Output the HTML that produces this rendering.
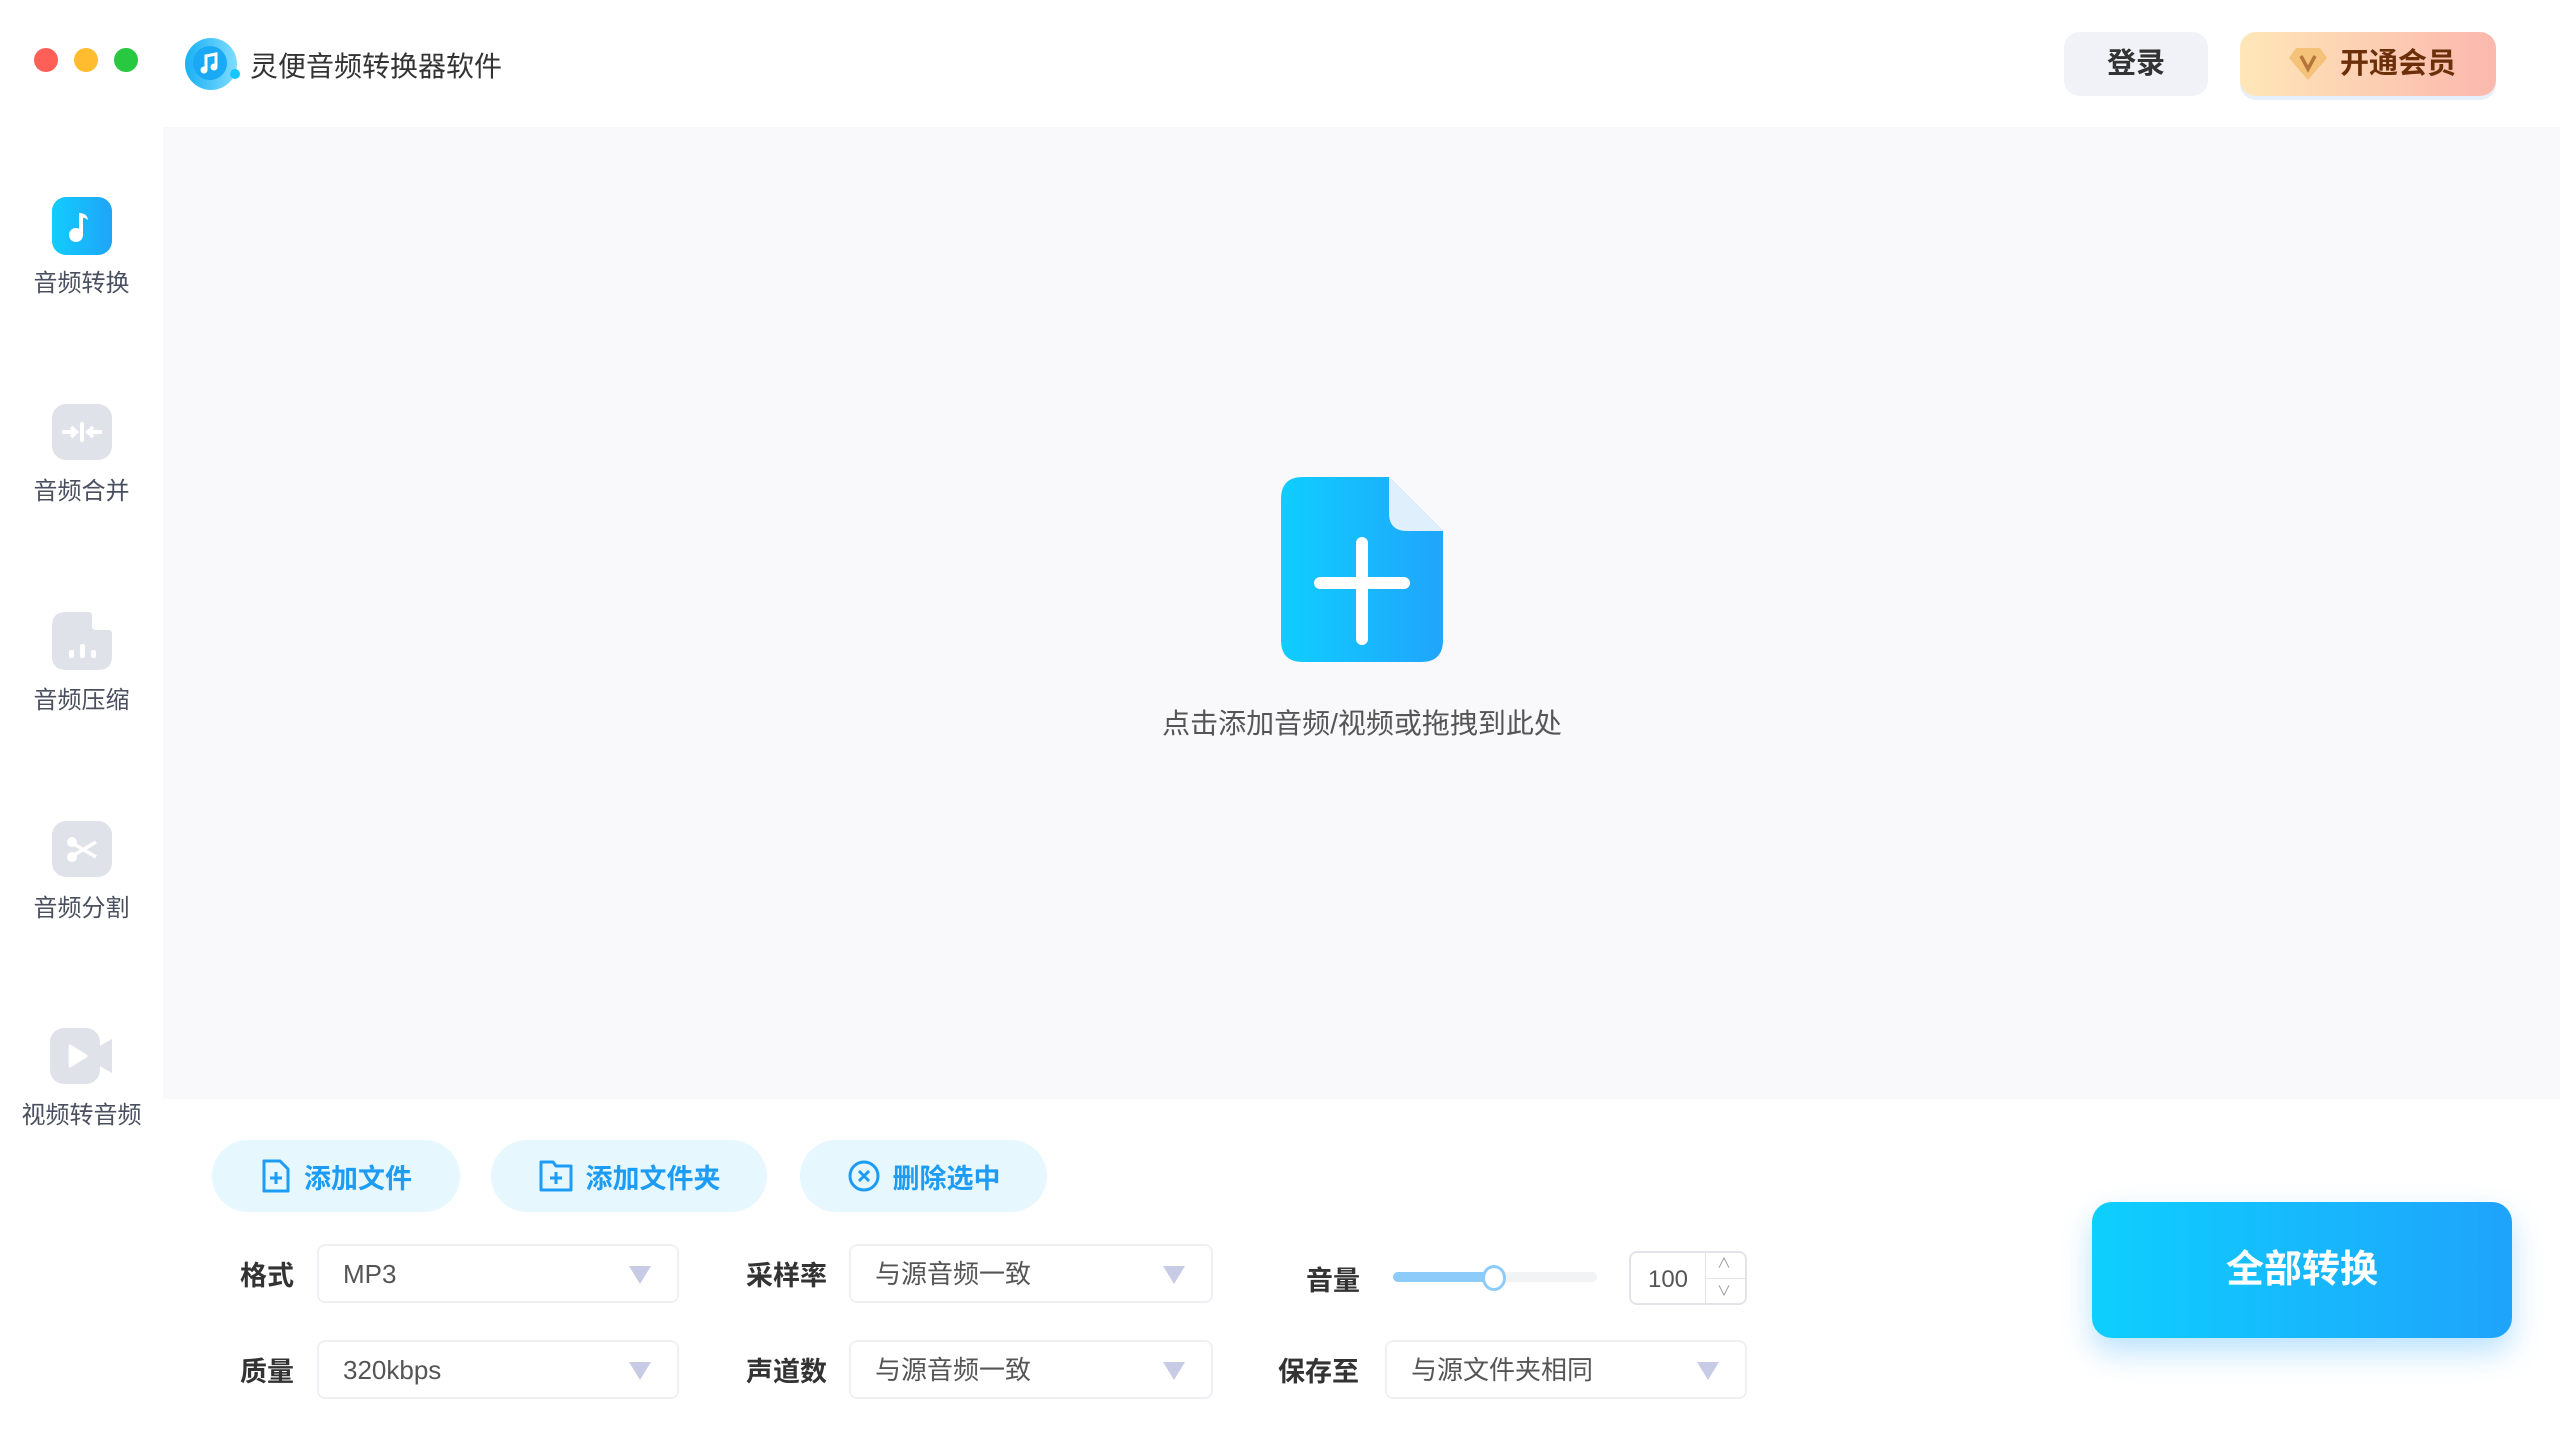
<!DOCTYPE html>
<html><head><meta charset="utf-8"><style>
*{margin:0;padding:0;box-sizing:border-box}
body{width:2560px;height:1440px;position:relative;overflow:hidden;background:#fff;font-family:"Liberation Sans","Noto Sans CJK SC",sans-serif;color:#333}
.abs{position:absolute}
.dot{position:absolute;width:24px;height:24px;border-radius:50%;top:48px}
.side{position:absolute;left:0;top:127px;width:163px;height:1313px;background:#fff}
.item{position:absolute;left:0;width:163px;text-align:center;font-size:24px;color:#4a5060}
.ico{position:absolute;left:52px;width:60px;height:56px;border-radius:14px;background:#dfe2e8}
.main{position:absolute;left:163px;top:127px;width:2397px;height:972px;background:#f9f9fb}
.btn{position:absolute;top:1140px;height:72px;border-radius:36px;background:#e6f7fe;color:#1c9cf5;font-size:27px;font-weight:bold;display:flex;align-items:center;justify-content:center;gap:12px}
.lbl{position:absolute;font-size:27px;font-weight:bold;color:#333}
.dd{position:absolute;height:59px;border:2px solid #eef0f4;border-radius:8px;background:#fff;font-size:26px;color:#555;padding-left:24px;line-height:57px}
.dd:after{content:"";position:absolute;right:26px;top:20px;border-left:11px solid transparent;border-right:11px solid transparent;border-top:18px solid #c8cbe6}
</style></head><body>
<div class="abs" style="left:0;top:0;width:2560px;height:127px;background:#fff"></div>
<div class="dot" style="left:34px;background:#fe5f57"></div>
<div class="dot" style="left:74px;background:#febc2e"></div>
<div class="dot" style="left:114px;background:#28c840"></div>
<svg class="abs" style="left:184px;top:36px" width="58" height="56" viewBox="0 0 58 56"><defs><linearGradient id="lg" x1="0" x2="1"><stop offset="0" stop-color="#1ab0f5"/><stop offset="1" stop-color="#7fdcff"/></linearGradient></defs><circle cx="27" cy="28" r="26" fill="url(#lg)"/><circle cx="26" cy="27" r="17" fill="#1aa9f4"/><path d="M22 34V20l10-2v13" stroke="#fff" stroke-width="3" fill="none"/><circle cx="20" cy="34" r="3.5" fill="#fff"/><circle cx="30" cy="31" r="3.5" fill="#fff"/><circle cx="51" cy="38" r="5" fill="#12c8ff"/></svg>
<div class="abs" style="left:250px;top:45px;font-size:28px;color:#333">灵便音频转换器软件</div>
<div class="abs" style="left:2064px;top:32px;width:144px;height:64px;border-radius:16px;background:#f0f2f7;font-size:29px;font-weight:bold;text-align:center;line-height:64px;color:#333">登录</div>
<div class="abs" style="left:2240px;top:32px;width:256px;height:64px;border-radius:16px;background:linear-gradient(90deg,#fee7b8,#fbb8ae);box-shadow:0 4px 0 #e6f0fb;font-size:29px;font-weight:bold;color:#6b2f0a;line-height:64px;padding-left:100px">开通会员</div>
<svg class="abs" style="left:2288px;top:46px" width="40" height="36" viewBox="0 0 40 36"><path d="M8 2h24l7 10-19 22L1 12z" fill="#f5c27a"/><path d="M13 10l7 13 7-13" stroke="#b5743a" stroke-width="3.5" fill="none"/></svg>

<div class="side"></div>
<div class="main"></div>
<svg class="abs" style="left:52px;top:197px" width="60" height="58" viewBox="0 0 60 58"><defs><linearGradient id="sg" x1="0" x2="1"><stop offset="0" stop-color="#12cdfd"/><stop offset="1" stop-color="#1fa4f8"/></linearGradient></defs><rect width="60" height="58" rx="14" fill="url(#sg)"/><path d="M27 39V16q8 0 9 7-4-3-5-2v18" fill="#fff"/><circle cx="24" cy="38" r="7" fill="#fff"/></svg>
<div class="item" style="top:263px">音频转换</div>
<div class="ico" style="top:404px"></div>
<svg class="abs" style="left:52px;top:404px" width="60" height="56"><path d="M10 28h13M19 23l5 5-5 5M50 28H37M41 23l-5 5 5 5" stroke="#fff" stroke-width="4" fill="none"/><rect x="28" y="18" width="4" height="20" rx="2" fill="#fff"/></svg>
<div class="item" style="top:471px">音频合并</div>
<svg class="abs" style="left:52px;top:612px" width="60" height="58"><path d="M14 0h24l22 20v24q0 14-14 14H14Q0 58 0 44V14Q0 0 14 0z" fill="#dfe2e8"/><path d="M40 1l19 17H44q-4 0-4-4z" fill="#fff"/><rect x="17" y="38" width="5" height="8" rx="2" fill="#fff"/><rect x="28" y="32" width="5" height="14" rx="2" fill="#fff"/><rect x="39" y="38" width="5" height="8" rx="2" fill="#fff"/></svg>
<div class="item" style="top:680px">音频压缩</div>
<div class="ico" style="top:821px"></div>
<svg class="abs" style="left:52px;top:821px" width="60" height="56"><circle cx="20" cy="21" r="5" fill="#fff"/><circle cx="20" cy="36" r="5" fill="#fff"/><path d="M22 23l22 13M22 34l22-13" stroke="#fff" stroke-width="3.5"/></svg>
<div class="item" style="top:888px">音频分割</div>
<svg class="abs" style="left:50px;top:1028px" width="64" height="56"><rect x="0" y="0" width="50" height="56" rx="14" fill="#dfe2e8"/><path d="M46 20l16-9v34l-16-9z" fill="#dfe2e8"/><path d="M20 18l16 10-16 10z" fill="#fff" stroke="#fff" stroke-width="3" stroke-linejoin="round"/></svg>
<div class="item" style="top:1095px">视频转音频</div>

<svg class="abs" style="left:1281px;top:477px" width="162" height="185" viewBox="0 0 162 185"><defs><linearGradient id="fg" x1="0" x2="1"><stop offset="0" stop-color="#0fcefe"/><stop offset="1" stop-color="#20a5fb"/></linearGradient></defs><path d="M22 0h86l54 54v109q0 22-22 22H22Q0 185 0 163V22Q0 0 22 0z" fill="url(#fg)"/><path d="M108 0l54 54h-36q-18 0-18-18z" fill="#dff0fc"/><path d="M81 66v96M39 106h84" stroke="#fff" stroke-width="12" stroke-linecap="round"/></svg>
<div class="abs" style="left:1130px;top:702px;width:464px;text-align:center;font-size:28px;color:#555">点击添加音频/视频或拖拽到此处</div>

<div class="btn" style="left:212px;width:248px"><svg width="32" height="34"><path d="M4 2h16l8 8v22H4z" fill="none" stroke="#1c9cf5" stroke-width="3" stroke-linejoin="round"/><path d="M16 13v12M10 19h12" stroke="#1c9cf5" stroke-width="3"/></svg>添加文件</div>
<div class="btn" style="left:491px;width:276px"><svg width="36" height="34"><path d="M3 3h12l3 4h15v24H3z" fill="none" stroke="#1c9cf5" stroke-width="3" stroke-linejoin="round"/><path d="M18 13v12M12 19h12" stroke="#1c9cf5" stroke-width="3"/></svg>添加文件夹</div>
<div class="btn" style="left:800px;width:247px"><svg width="34" height="34"><circle cx="17" cy="17" r="14" fill="none" stroke="#1c9cf5" stroke-width="3"/><path d="M12 12l10 10M22 12l-10 10" stroke="#1c9cf5" stroke-width="3"/></svg>删除选中</div>

<div class="lbl" style="left:240px;top:1254px">格式</div>
<div class="dd" style="left:317px;top:1244px;width:362px">MP3</div>
<div class="lbl" style="left:746px;top:1254px">采样率</div>
<div class="dd" style="left:849px;top:1244px;width:364px">与源音频一致</div>
<div class="lbl" style="left:1306px;top:1259px">音量</div>
<div class="abs" style="left:1393px;top:1272px;width:204px;height:10px;border-radius:5px;background:#f2f3f5"></div>
<div class="abs" style="left:1393px;top:1272px;width:101px;height:10px;border-radius:5px;background:#8ccbfa"></div>
<div class="abs" style="left:1482px;top:1265px;width:24px;height:26px;border-radius:50%;background:#fff;border:3px solid #8ccbfa"></div>
<div class="abs" style="left:1629px;top:1251px;width:118px;height:54px;border:2px solid #e2e4ea;border-radius:8px;background:#fff"><div class="abs" style="left:0;top:0;width:74px;height:50px;line-height:54px;text-align:center;font-size:24px;color:#555">100</div><div class="abs" style="left:74px;top:0;width:1px;height:50px;background:#e2e4ea"></div><div class="abs" style="left:74px;top:25px;width:40px;height:1px;background:#e2e4ea"></div><div class="abs" style="left:86px;top:0;font-size:14px;color:#999">∧</div><div class="abs" style="left:86px;top:28px;font-size:14px;color:#999">∨</div></div>

<div class="lbl" style="left:240px;top:1350px">质量</div>
<div class="dd" style="left:317px;top:1340px;width:362px">320kbps</div>
<div class="lbl" style="left:746px;top:1350px">声道数</div>
<div class="dd" style="left:849px;top:1340px;width:364px">与源音频一致</div>
<div class="lbl" style="left:1278px;top:1350px">保存至</div>
<div class="dd" style="left:1385px;top:1340px;width:362px">与源文件夹相同</div>

<div class="abs" style="left:2092px;top:1202px;width:420px;height:136px;border-radius:20px;background:linear-gradient(90deg,#0ecffe,#1fa3fb);box-shadow:0 14px 30px rgba(30,160,250,0.3);color:#fff;font-size:38px;font-weight:bold;text-align:center;line-height:136px">全部转换</div>
</body></html>
